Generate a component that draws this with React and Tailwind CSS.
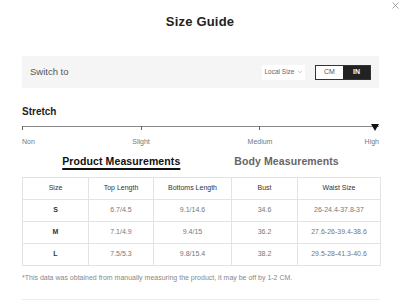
import { ChevronDown } from 'lucide-react';

const rows = [
  { size: 'S', top: '6.7/4.5', bottoms: '9.1/14.6', bust: '34.6', waist: '26-24.4-37.8-37' },
  { size: 'M', top: '7.1/4.9', bottoms: '9.4/15', bust: '36.2', waist: '27.6-26-39.4-38.6' },
  { size: 'L', top: '7.5/5.3', bottoms: '9.8/15.4', bust: '38.2', waist: '29.5-28-41.3-40.6' },
];

const stretchLabels = ['Non', 'Slight', 'Medium', 'High'];

export default function App() {
  return (
    <div className="relative h-[304px] w-[400px] overflow-hidden bg-white px-[22px] font-['Liberation_Sans',Arial,sans-serif] text-[#222]">
      {/* close */}
      <svg className="absolute right-[1px] top-[2px]" width="7" height="7" viewBox="0 0 7 7">
        <path d="M0.5 0.5 L6.5 6.5 M6.5 0.5 L0.5 6.5" stroke="#999" strokeWidth="0.9" />
      </svg>

      <div className="flex h-[42px] items-center justify-center">
        <h1 className="text-[13px] font-bold leading-none tracking-[0.2px]">Size Guide</h1>
      </div>

      <div className="mt-[14px] flex h-[32px] w-[357px] items-center bg-[#f5f5f5] pl-[8px] pr-[8px]">
        <span className="text-[9.5px] text-[#555]">Switch to</span>
        <div className="ml-auto flex items-center">
          <div className="flex h-[15px] w-[43px] items-center justify-center gap-[2px] bg-white text-[6.5px] text-[#666]">
            Local Size
            <ChevronDown size={6} strokeWidth={1.5} />
          </div>
          <div className="ml-[10px] flex h-[15px] border border-[#333]">
            <div className="flex w-[27px] items-center justify-center bg-white text-[7px] text-[#555]">CM</div>
            <div className="flex w-[27px] items-center justify-center bg-[#222] text-[7px] font-bold text-white">IN</div>
          </div>
        </div>
      </div>

      <div className="mt-[18px] text-[10px] font-bold leading-[12px]">Stretch</div>

      <div className="relative mt-[8px] h-[1px] w-[357px] bg-[#888]">
        <div className="flex h-full justify-between">
          <span className="h-[4px] w-[1px] bg-[#666]" />
          <span className="h-[4px] w-[1px] bg-[#666]" />
          <span className="h-[4px] w-[1px] bg-[#666]" />
          <span className="w-[1px]" />
        </div>
        <svg className="absolute right-[0px] top-[-2px]" width="8" height="7" viewBox="0 0 8 7">
          <path d="M0 0 H8 L4 7 Z" fill="#111" />
        </svg>
      </div>

      <div className="mt-[10px] flex h-[9px] w-[357px] justify-between text-[7px] leading-[9px] text-[#777]">
        {stretchLabels.map((label, i) => (
          <div
            key={label}
            className={`flex w-0 whitespace-nowrap ${
              i === 0 ? 'justify-start' : i === 3 ? 'justify-end' : 'justify-center'
            }`}
          >
            {label}
          </div>
        ))}
      </div>

      <div className="mt-[8px] flex h-[14px] w-[357px] items-center justify-center gap-[54px] text-[10.5px] font-bold leading-[14px] tracking-[0.1px]">
        <span className="text-[#111] underline decoration-2 underline-offset-[3px]">Product Measurements</span>
        <span className="text-[#666]">Body Measurements</span>
      </div>

      <table className="mt-[9px] w-[358px] table-fixed border-collapse text-center text-[7px]">
        <colgroup>
          <col className="w-[66px]" />
          <col className="w-[65px]" />
          <col className="w-[78px]" />
          <col className="w-[66px]" />
          <col className="w-[83px]" />
        </colgroup>
        <thead>
          <tr className="h-[22px] text-[#333]">
            <th className="border border-[#e3e3e3] font-normal">Size</th>
            <th className="border border-[#e3e3e3] font-normal">Top Length</th>
            <th className="border border-[#e3e3e3] font-normal">Bottoms Length</th>
            <th className="border border-[#e3e3e3] font-normal">Bust</th>
            <th className="border border-[#e3e3e3] font-normal">Waist Size</th>
          </tr>
        </thead>
        <tbody>
          {rows.map((r) => (
            <tr key={r.size} className="h-[22px] text-[#777]">
              <td className="border border-[#e3e3e3] font-bold text-[#333]">{r.size}</td>
              <td className="border border-[#e3e3e3]">{r.top}</td>
              <td className="border border-[#e3e3e3]">{r.bottoms}</td>
              <td className="border border-[#e3e3e3]">{r.bust}</td>
              <td className="border border-[#e3e3e3]">{r.waist}</td>
            </tr>
          ))}
        </tbody>
      </table>

      <p className="mt-[7px] text-[7px] leading-[9px] text-[#888]">
        *This data was obtained from manually measuring the product, it may be off by 1-2 CM.
      </p>

      <div className="mt-[17px] h-[1px] w-[358px] bg-[#ececec]" />
    </div>
  );
}
